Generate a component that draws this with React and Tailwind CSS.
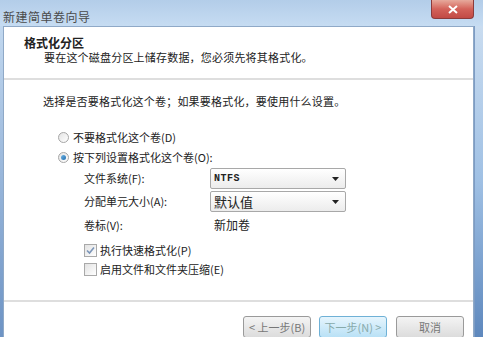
import React from "react";

const font = { fontFamily: '"SimSun", "Noto Sans CJK SC", "Liberation Sans", sans-serif' };

const Radio = ({ checked }) => (
  <span className="w-[11px] h-[11px] rounded-full border border-[#a6a6a6] bg-gradient-to-br from-[#e4e4e4] to-white flex items-center justify-center">
    {checked && <span className="w-[5px] h-[5px] rounded-full bg-gradient-to-br from-[#6fb3e3] to-[#1f6fb0]" />}
  </span>
);

const Check = ({ checked }) => (
  <span className="w-[13px] h-[13px] border border-[#a9a9a9] bg-gradient-to-br from-[#e2e2e2] to-white flex items-center justify-center">
    {checked && (
      <svg width="9" height="9" viewBox="0 0 9 9">
        <path d="M1 4.5 L3.5 7 L8 1.5" fill="none" stroke="#7b95b8" strokeWidth="1.6" />
      </svg>
    )}
  </span>
);

const Select = ({ value, mono }) => (
  <div className="w-[136px] h-[21px] border border-[#a8a8a8] rounded-[2px] bg-gradient-to-b from-white to-[#ececec] flex items-center justify-between pl-[3px] pr-[6px]">
    <span className={mono ? "text-[10px] font-bold tracking-[0.5px]" : "text-[13px]"} style={mono ? { fontFamily: '"Liberation Mono", monospace' } : undefined}>
      {value}
    </span>
    <svg width="7" height="4" viewBox="0 0 7 4">
      <path d="M0 0 H7 L3.5 4 Z" fill="#222" />
    </svg>
  </div>
);

const Button = ({ children, active }) => (
  <div
    className={`w-[68px] h-[22px] rounded-[3px] border flex items-center justify-center text-[11px] ${
      active
        ? "border-[#6fb1d6] bg-gradient-to-b from-[#e6f5fd] to-[#b9e1f6] text-[#8aa]"
        : "border-[#9a9a9a] bg-gradient-to-b from-[#f4f4f4] to-[#dcdcdc] text-[#777]"
    }`}
  >
    {children}
  </div>
);

export default function App() {
  return (
    <div className="w-[483px] h-[337px] overflow-hidden bg-[#bcd4ee] flex flex-col text-[#222]" style={font}>
      {/* title bar */}
      <div className="h-[29px] flex items-start justify-between bg-gradient-to-b from-[#b3cde9] to-[#c6dcf2]">
        <span className="text-[12px] text-[#4a4a4a] pl-[3px] pt-[8px] tracking-[0.5px]">新建简单卷向导</span>
        <div className="mr-[9px] w-[43px] h-[19px] rounded-b-[4px] border border-[#8c3b3b] border-t-0 bg-gradient-to-b from-[#e6a99c] via-[#d3625a] to-[#c24a45] flex items-center justify-center">
          <svg width="10" height="9" viewBox="0 0 10 9">
            <path d="M1 1 L9 8 M9 1 L1 8" stroke="white" strokeWidth="2" />
          </svg>
        </div>
      </div>

      <div className="flex-1 flex">
        <div className="w-[3px] bg-gradient-to-b from-[#c2d8ef] to-[#6d93c4]" />
        <div className="w-[471px] bg-white border border-[#8fa9c7] border-b-0 flex flex-col">
          {/* header */}
          <div className="h-[53px] border-b-2 border-[#dedede] pl-[20px] pt-[9px]">
            <div className="text-[12px] font-bold leading-[14px]">格式化分区</div>
            <div className="text-[11px] tracking-[0.2px] leading-[14px] pl-[20px]">
              要在这个磁盘分区上储存数据，您必须先将其格式化。
            </div>
          </div>

          {/* body */}
          <div className="h-[222px] border-b-2 border-[#dedede] flex flex-col">
            <div className="text-[11px] tracking-[0.2px] pl-[39px] mt-[14px] leading-[14px]">
              选择是否要格式化这个卷；如果要格式化，要使用什么设置。
            </div>

            <div className="mt-[22px] pl-[54px] flex items-center gap-[4px] text-[11px] h-[14px]">
              <Radio />
              <span>不要格式化这个卷(D)</span>
            </div>
            <div className="mt-[6px] pl-[54px] flex items-center gap-[4px] text-[11px] h-[14px]">
              <Radio checked />
              <span>按下列设置格式化这个卷(O):</span>
            </div>

            <div className="mt-[4px] pl-[80px] flex items-center h-[21px] text-[11px]">
              <span className="w-[126px]">文件系统(F):</span>
              <Select value="NTFS" mono />
            </div>
            <div className="mt-[2px] pl-[80px] flex items-center h-[21px] text-[11px]">
              <span className="w-[126px]">分配单元大小(A):</span>
              <Select value="默认值" />
            </div>
            <div className="mt-[3px] pl-[80px] flex items-center h-[20px] text-[11px]">
              <span className="w-[130px]">卷标(V):</span>
              <span className="text-[12px]">新加卷</span>
            </div>

            <div className="mt-[7px] pl-[80px] flex items-center gap-[3px] h-[16px] text-[11px]">
              <Check checked />
              <span>执行快速格式化(P)</span>
            </div>
            <div className="mt-[3px] pl-[80px] flex items-center gap-[3px] h-[16px] text-[11px]">
              <Check />
              <span>启用文件和文件夹压缩(E)</span>
            </div>
          </div>

          {/* buttons */}
          <div className="flex-1 flex items-start gap-[8px] pl-[239px] pt-[14px]">
            <Button>&lt; 上一步(B)</Button>
            <Button active>下一步(N) &gt;</Button>
            <div className="ml-[1px]">
              <Button>取消</Button>
            </div>
          </div>
        </div>
        <div className="flex-1 bg-gradient-to-b from-[#c9dcf0] via-[#9fc0e4] to-[#5e88bd] border-l border-[#7d9cc4]" />
      </div>
    </div>
  );
}
